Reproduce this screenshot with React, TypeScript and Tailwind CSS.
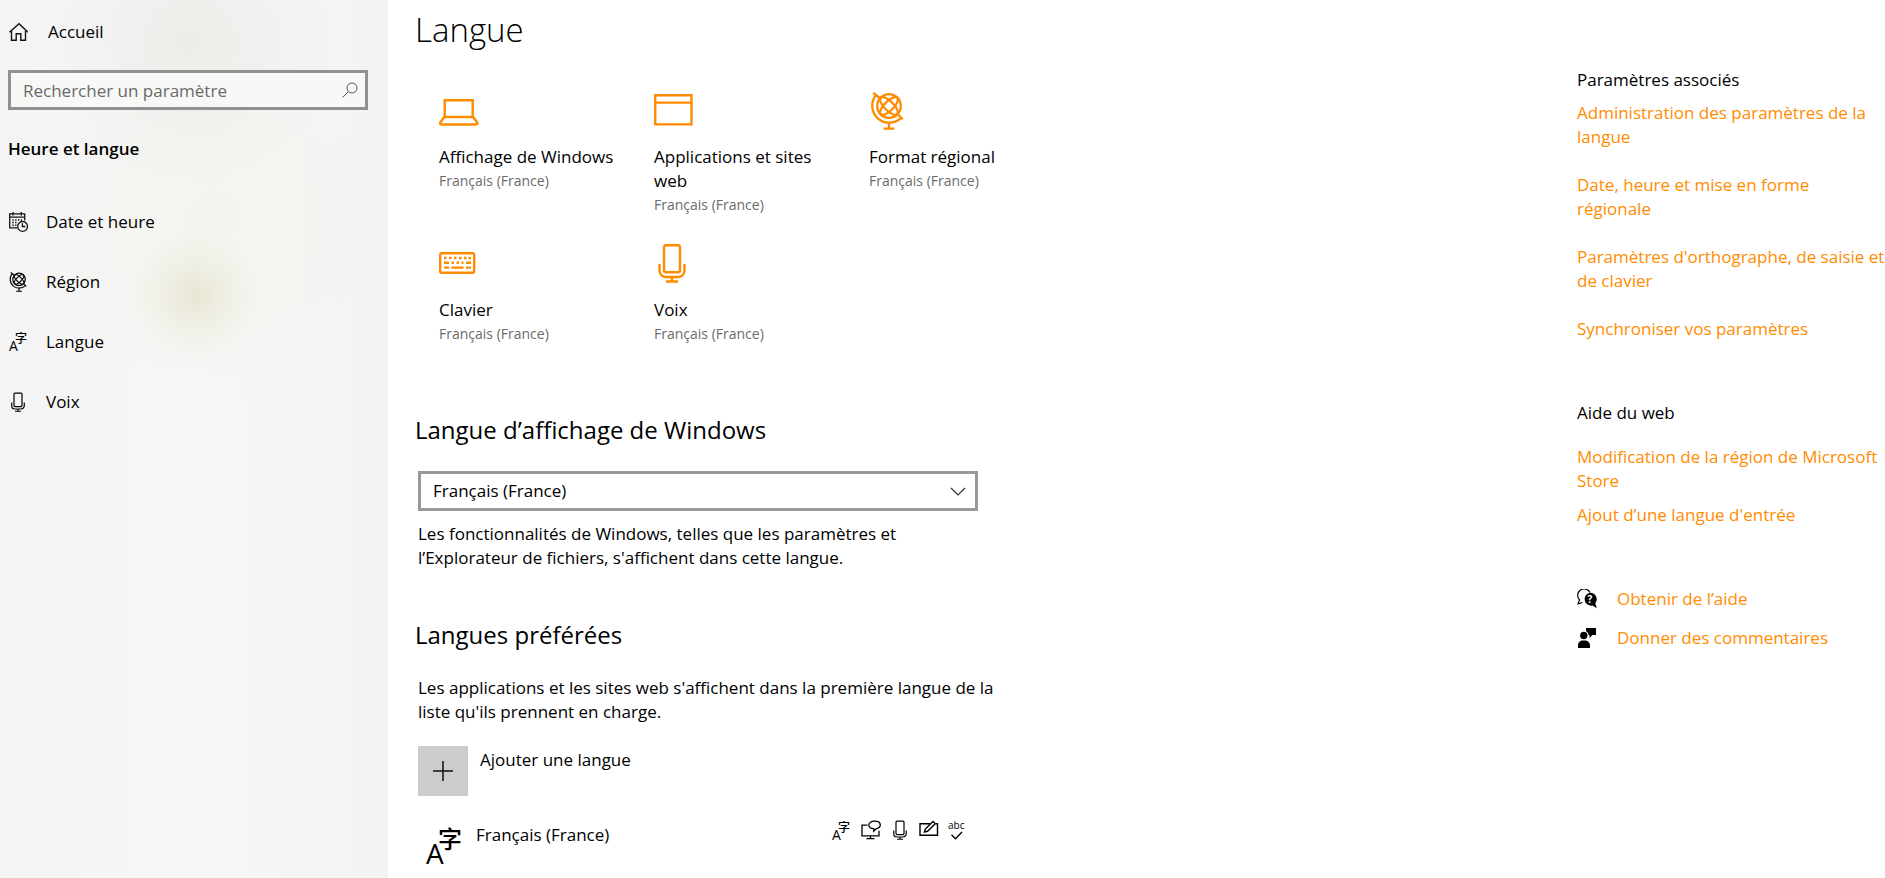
import { useState } from 'react';
import type { ReactNode } from 'react';

// 1. ICONS
interface IconProps {
  className?: string;
}

const HomeIcon = () => (
  <svg viewBox="0 0 20 20" className="h-5 w-5 shrink-0" fill="none" stroke="#111" strokeWidth="1.4" aria-hidden="true">
    <path d="M1.500 10.300 11 1.800l9 8.500" />
    <path d="M3.500 8.700v9.600h4.700v-6.500h4.600v6.500h4.700V8.700" />
  </svg>
);

const CalendarIcon = () => (
  <svg viewBox="0 0 20 20" className="h-5 w-5 shrink-0" fill="none" stroke="#111" strokeWidth="1.3" aria-hidden="true">
    <path d="M9 15.900H1.700V1.900h15v6.600M1.700 5.200h15M5 0v3.600M13.300 0v3.600" />
    <path d="M4.300 8h1.400M7.100 8h1.400M9.900 8h1.400M4.300 10.600h1.400M7.100 10.600h1.400M4.300 13.200h1.400M7.100 13.200h1.400M12.700 8h1.400" strokeWidth="1.500" />
    <circle cx="14.600" cy="14.400" r="4.900" />
    <path d="M14.400 11.200v3.300h2.900" />
  </svg>
);

const GlobeIcon = ({ className }: IconProps) => (
  <svg viewBox="0 0 36 38" className={className} fill="none" stroke="currentColor" strokeWidth="2.300" aria-hidden="true">
    <circle cx="20" cy="14" r="11.800" />
    <ellipse cx="20" cy="14" rx="11.800" ry="4.600" transform="rotate(45 20 14)" />
    <ellipse cx="20" cy="14" rx="11.800" ry="4.600" transform="rotate(-45 20 14)" />
    <path d="M6.600 3.600A17 17 0 0 0 31.600 26.400" />
    <path d="M4.200.800l7 5.600M28.500 22l5.200 5.200" />
    <path d="M20 31v5M14.500 36.600h11" />
  </svg>
);

const LanguageIcon = ({ className }: IconProps) => (
  <svg viewBox="0 0 36 36" className={className} fill="currentColor" overflow="visible" aria-hidden="true">
    <text x="0" y="36" fontSize="28" fontWeight="500" fontFamily='"Open Sans", sans-serif'>A</text>
    <text x="12" y="20" fontSize="24" fontWeight="500" fontFamily='"Noto Sans CJK SC", sans-serif'>字</text>
  </svg>
);

const MicIcon = ({ className }: IconProps) => (
  <svg viewBox="0 0 28 40" className={className} fill="none" stroke="currentColor" strokeWidth="2.400" aria-hidden="true">
    <rect x="6" y="2.200" width="16" height="27" rx="2" />
    <path d="M1.500 21v6.500a6.500 6.500 0 0 0 6.500 6.500h12a6.500 6.500 0 0 0 6.500-6.500V21M14 34v4M8 38.500h12" />
  </svg>
);

const LaptopIcon = () => (
  <svg viewBox="0 0 40 40" className="h-10 w-10" fill="none" stroke="currentColor" strokeWidth="2.400" aria-hidden="true">
    <path d="M5.700 27V10.200h28V27" />
    <path d="M5.200 27h29l4 5.500c.6 1.200 0 2-1.200 2H2.500c-1.200 0-1.800-.8-1.200-2z" strokeLinejoin="round" />
  </svg>
);

const WindowIcon = () => (
  <svg viewBox="0 0 40 40" className="h-10 w-10" fill="none" stroke="currentColor" strokeWidth="2.400" aria-hidden="true">
    <path d="M1.200 5.200h36.300v29.200H1.200zM1.200 12.600h36.300" />
  </svg>
);

const KeyboardIcon = () => (
  <svg viewBox="0 0 40 40" className="h-10 w-10" fill="none" stroke="currentColor" strokeWidth="2.400" aria-hidden="true">
    <rect x="1.200" y="10.200" width="34" height="19.500" rx="1.500" />
    <path d="M5 15h2.500M10 15h2.500M15 15h2.500M20 15h2.500M25 15h2.500M29.500 15h2.500M5 19.800h5M12.500 19.800H15M17.500 19.800H20M22.500 19.800h2M27 19.800h5M5 24.600h5M12.500 24.600h12M27 24.600h5" />
  </svg>
);

const DisplayChatIcon = () => (
  <svg viewBox="0 0 20 20" className="h-5 w-5" fill="none" stroke="currentColor" strokeWidth="1.300" aria-hidden="true">
    <path d="M6.500 5.200H1v10.600h17v-5M9.500 16v2.500M5.500 18.700h8" />
    <path d="M13.500 1.200c3.400 0 5.800 1.600 5.800 3.800 0 1.700-1.500 3.100-3.800 3.600l-2.800 2.600V8.700C9.800 8.500 7.800 7 7.800 5c0-2.200 2.400-3.800 5.700-3.800z" />
  </svg>
);

const HandwritingIcon = () => (
  <svg viewBox="0 0 20 20" className="h-5 w-5" fill="none" stroke="currentColor" strokeWidth="1.400" aria-hidden="true">
    <path d="M11 3.700H1v11.500h17.500V3.700H17" />
    <path d="m5.500 12 .8-3L14 1.500l2.300 2.300L8.500 11.300z" />
  </svg>
);

const SpellingIcon = () => (
  <svg viewBox="0 0 20 20" className="h-5 w-5" fill="none" overflow="visible" aria-hidden="true">
    <text x="0" y="9" fontSize="10" fill="currentColor" fontFamily='"Open Sans", sans-serif'>abc</text>
    <path d="m3.500 14.700 4 4L14 12" stroke="currentColor" strokeWidth="1.400" />
  </svg>
);

const HelpIcon = () => (
  <svg viewBox="0 0 20 20" className="h-5 w-5 shrink-0" aria-hidden="true">
    <path d="M13 3.500A6.500 6.500 0 1 0 2.600 11L1 14.800l4.500-1.300" fill="none" stroke="#000" strokeWidth="1.200" />
    <path d="M13.300 3.700a6.500 6.500 0 0 1 5 10.500l1.500 5-4.300-2.700A6.500 6.500 0 1 1 13.300 3.700z" fill="#000" />
    <text x="13" y="14" fontSize="10" fontWeight="700" textAnchor="middle" fill="#fff" fontFamily='"Open Sans", sans-serif'>?</text>
  </svg>
);

const FeedbackIcon = () => (
  <svg viewBox="0 0 20 20" className="h-5 w-5 shrink-0" fill="#000" aria-hidden="true">
    <circle cx="6.800" cy="7.500" r="3.700" />
    <path d="M1 20v-2.500C1 14.500 3 12.400 5.500 12.400h2.600c2.700 0 4.900 2.100 4.900 5.100V20zM9 0h10v7h-3.500l-3 3V7h-.8A5 5 0 0 0 9 3z" />
  </svg>
);

// 2. DATA
interface Tile {
  title: string;
  icon: ReactNode;
}

const navItems: { label: string; icon: ReactNode }[] = [
  { label: 'Date et heure', icon: <CalendarIcon /> },
  { label: 'Région', icon: <GlobeIcon className="h-5 w-5 shrink-0" /> },
  { label: 'Langue', icon: <LanguageIcon className="mx-[1px] h-[18px] w-[18px] shrink-0" /> },
  { label: 'Voix', icon: <MicIcon className="h-5 w-5 shrink-0" /> },
];

const tiles: Tile[] = [
  { title: 'Affichage de Windows', icon: <LaptopIcon /> },
  { title: 'Applications et sites web', icon: <WindowIcon /> },
  { title: 'Format régional', icon: <GlobeIcon className="h-[38px] w-9" /> },
  { title: 'Clavier', icon: <KeyboardIcon /> },
  { title: 'Voix', icon: <MicIcon className="ml-1 h-10 w-7" /> },
];

const relatedLinks = [
  'Administration des paramètres de la langue',
  'Date, heure et mise en forme régionale',
  "Paramètres d'orthographe, de saisie et de clavier",
  'Synchroniser vos paramètres',
];

export default function App() {
  const [search, setSearch] = useState('');
  const [language, setLanguage] = useState('fr');

  return (
    <div className="flex min-h-screen bg-white font-['Open_Sans','Noto_Sans',sans-serif] text-[17px] leading-6 text-black">

      {/* NAVIGATION */}
      <nav className="w-[388px] shrink-0 bg-[#f4f4f4] bg-[radial-gradient(circle_at_195px_295px,#e9e5d3_0px,rgba(236,234,220,0.6)_30px,transparent_65px),radial-gradient(circle_at_190px_40px,#ecece9_0px,transparent_150px),radial-gradient(circle_at_210px_220px,#f2f5ee_0px,transparent_190px),linear-gradient(90deg,#f4f4f4,#f7f7f7_50%,#f3f3f2)] pl-2 pt-5">
        <a href="#accueil" className="flex items-center gap-5">
          <HomeIcon />
          Accueil
        </a>

        <div className="relative mr-5 mt-[26px]">
          <input
            type="text"
            aria-label="Rechercher un paramètre"
            placeholder="Rechercher un paramètre"
            value={search}
            onChange={(e) => setSearch(e.target.value)}
            className="h-10 w-full border-[3px] border-[#91918f] bg-[#f8f8f6] pl-3 pr-10 outline-none placeholder:text-[#6a6a6a]"
          />
          <svg viewBox="0 0 16 16" className="absolute right-[10px] top-3 h-4 w-4" fill="none" stroke="#555" aria-hidden="true">
            <circle cx="10" cy="6" r="5" />
            <path d="M6.500 9.500.5 15.500" />
          </svg>
        </div>

        <h2 className="mt-[27px] font-semibold">Heure et langue</h2>

        <ul className="mt-[49px] space-y-9">
          {navItems.map((item) => (
            <li key={item.label}>
              <a href="#" className="flex items-center gap-[18px]">
                {item.icon}
                {item.label}
              </a>
            </li>
          ))}
        </ul>
      </nav>

      {/* CONTENT */}
      <main className="min-w-0 flex-1 pl-[27px] pt-2">
        <h1 className="text-[33px] font-[350] leading-[44px]">Langue</h1>

        <div className="ml-6 mt-[38px] grid grid-cols-[repeat(3,215px)] gap-y-[26px]">
          {tiles.map((tile) => (
            <div key={tile.title} className="pr-9">
              <div className="mb-[15px] flex h-10 items-end text-[#ff8c00]">{tile.icon}</div>
              <p>{tile.title}</p>
              <p className="text-[14px] leading-6 text-[#6b6b6b]">Français (France)</p>
            </div>
          ))}
        </div>

        <h2 className="mt-[68px] text-[24px] leading-8">
          <label htmlFor="display-language">Langue d’affichage de Windows</label>
        </h2>
        <div className="ml-[3px] max-w-[560px]">
          <div className="relative mt-[25px]">
            <select
              id="display-language"
              value={language}
              onChange={(e) => setLanguage(e.target.value)}
              className="h-10 w-full appearance-none border-[3px] border-[#999] bg-white pl-3 pr-10"
            >
              <option value="fr">Français (France)</option>
            </select>
            <svg viewBox="0 0 16 10" className="pointer-events-none absolute right-3 top-4 h-[10px] w-4" fill="none" stroke="#333" strokeWidth="1.200" aria-hidden="true">
              <path d="m1 1 7 7 7-7" />
            </svg>
          </div>
          <p className="mt-[11px]">
            Les fonctionnalités de Windows, telles que les paramètres et l’Explorateur de fichiers, s'affichent dans cette langue.
          </p>
        </div>

        <h2 className="mt-[49px] text-[24px] leading-8">Langues préférées</h2>
        <div className="ml-[3px] max-w-[580px]">
          <p className="mt-[25px]">
            Les applications et les sites web s'affichent dans la première langue de la liste qu'ils prennent en charge.
          </p>

          <button type="button" className="mt-[22px] flex items-start gap-3">
            <span className="flex h-[50px] w-[50px] items-center justify-center bg-[#ccc]">
              <svg viewBox="0 0 20 20" className="h-5 w-5" stroke="#111" strokeWidth="1.500" aria-hidden="true">
                <path d="M10 0v20M0 10h20" />
              </svg>
            </span>
            <span className="mt-[2px]">Ajouter une langue</span>
          </button>

          <div className="mt-6 flex items-start pl-2">
            <LanguageIcon className="mt-2 h-9 w-9" />
            <span className="ml-[14px] mt-[3px]">Français (France)</span>
            <div className="ml-auto mr-[30px] flex gap-[9px]">
              <LanguageIcon className="mr-[2px] mt-[2px] h-[18px] w-[18px]" />
              <DisplayChatIcon />
              <MicIcon className="h-5 w-5" />
              <HandwritingIcon />
              <SpellingIcon />
            </div>
          </div>
        </div>
      </main>

      {/* RELATED SETTINGS */}
      <aside className="w-[308px] shrink-0 pt-[68px]">
        <h3>Paramètres associés</h3>
        <ul className="mt-[9px] space-y-6 text-[#ff8c00]">
          {relatedLinks.map((link) => (
            <li key={link}>
              <a href="#">{link}</a>
            </li>
          ))}
        </ul>

        <h3 className="mt-[60px]">Aide du web</h3>
        <ul className="mt-5 space-y-[10px] text-[#ff8c00]">
          <li><a href="#">Modification de la région de Microsoft Store</a></li>
          <li><a href="#">Ajout d’une langue d'entrée</a></li>
        </ul>

        <ul className="mt-[60px] space-y-[15px] text-[#ff8c00]">
          <li>
            <a href="#" className="flex items-center gap-5"><HelpIcon />Obtenir de l’aide</a>
          </li>
          <li>
            <a href="#" className="flex items-center gap-5"><FeedbackIcon />Donner des commentaires</a>
          </li>
        </ul>
      </aside>
    </div>
  );
}
